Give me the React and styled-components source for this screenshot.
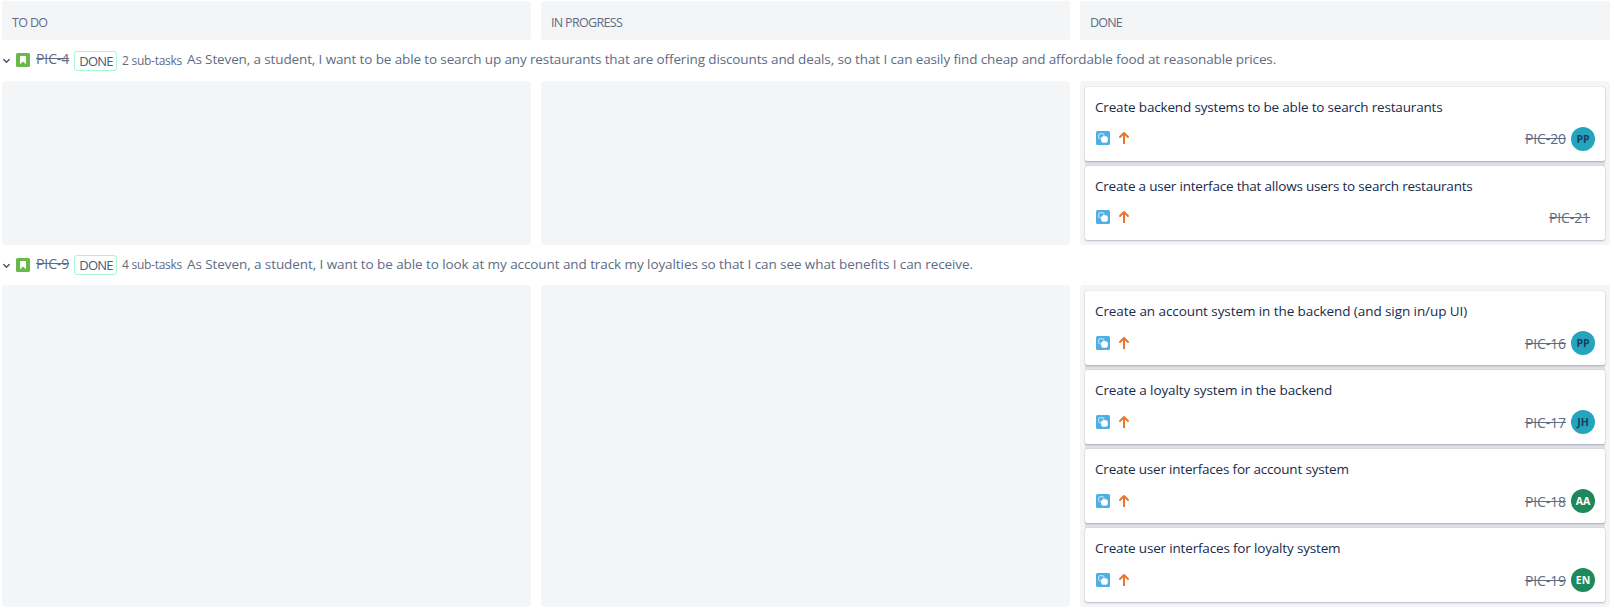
import React from "react";
import styled, { createGlobalStyle } from "styled-components";

const GlobalStyle = createGlobalStyle`
  * { box-sizing: border-box; }
  body {
    margin: 0;
    background: #fff;
    color: #172b4d;
    font-family: "Segoe UI", "Open Sans", "Noto Sans", sans-serif;
    font-size: 13.5px;
  }
`;

const Board = styled.main`
  width: 1614px;
  height: 609px;
  padding: 1px 4px 0 2px;
  overflow: hidden;
`;

const Columns = styled.div`
  display: grid;
  grid-template-columns: 529px 529px 530px;
  column-gap: 10px;
`;

const ColumnHeader = styled.h2`
  height: 39px;
  margin: 0;
  padding: 13px 10px 0;
  border-radius: 3px;
  background: #f4f5f7;
  color: #5e6c84;
  font-size: 12.5px;
  line-height: 17px;
  font-weight: 400;
  letter-spacing: ${(p) => p.$spacing}px;
`;

const Column = styled.div`
  padding: 6px 5px 5px;
  min-height: 60px;
  border-radius: 4px;
  background: #f4f5f7;
`;

const CardList = styled.div`
  display: flex;
  flex-direction: column;
  gap: 5px;
  border-radius: 2px;
  background: #dfe1e6;
`;

const Card = styled.article`
  display: flex;
  flex-direction: column;
  justify-content: space-between;
  height: 74px;
  padding: 10px;
  border-radius: 2px;
  background: #fff;
  box-shadow: 0 1px 2px rgba(9, 30, 66, 0.25), 0 0 1px rgba(9, 30, 66, 0.2);
`;

const CardTitle = styled.div`
  height: 20px;
  line-height: 20px;
  white-space: nowrap;
  letter-spacing: ${(p) => p.$spacing}px;
`;

const CardFooter = styled.div`
  display: flex;
  align-items: center;
  height: 24px;
  padding-left: 1px;
`;

const CardMeta = styled.div`
  flex: 1;
  display: flex;
  align-items: center;
  gap: 7px;
  padding-bottom: ${(p) => (p.$raised ? 2 : 0)}px;
`;

const CardKey = styled.span`
  margin-left: auto;
  margin-right: 5px;
  padding-top: 1px;
  color: #5e6c84;
  font-size: 14px;
  line-height: 20px;
  letter-spacing: -0.1px;
  text-decoration: line-through;
`;

const Avatar = styled.span`
  display: flex;
  align-items: center;
  justify-content: center;
  width: 24px;
  height: 24px;
  border-radius: 50%;
  background: ${(p) => (p.$tone === "teal" ? "#24a5bd" : "#1f875c")};
  color: ${(p) => (p.$tone === "teal" ? "#1b3b5e" : "#fff")};
  font-size: 10.5px;
  font-weight: 700;
  line-height: 24px;
`;

const SwimlaneHeader = styled.div`
  display: flex;
  align-items: center;
  height: ${(p) => p.$height}px;
  color: #5e6c84;
  white-space: nowrap;
`;

const Chevron = styled.svg`
  flex: none;
  margin: 1px 5px 0 0;
`;

const StoryMark = styled.svg`
  flex: none;
  margin-bottom: 1px;
`;

const StoryKey = styled.span`
  margin: 0 5px 3px 6px;
  width: 33px;
  font-size: 14px;
  line-height: 20px;
  letter-spacing: -0.1px;
  text-decoration: line-through;
`;

const Status = styled.span`
  width: 43px;
  height: 20px;
  padding-left: 1px;
  border: 1px solid #abf5d1;
  border-radius: 3px;
  color: #4c5a75;
  font-size: 13px;
  line-height: 19px;
  letter-spacing: -0.8px;
  text-align: center;
`;

const SubtaskCount = styled.span`
  width: 70px;
  padding-left: 5px;
  margin-bottom: 1px;
  font-size: 12px;
  letter-spacing: -0.27px;
`;

const Summary = styled.span`
  height: 20px;
  margin-bottom: 3px;
  line-height: 20px;
  letter-spacing: ${(p) => p.$spacing}px;
`;

const StoryIcon = () => (
  <StoryMark width="14" height="14" viewBox="0 0 14 14">
    <rect width="14" height="14" rx="1.5" fill="#67b94a" />
    <path d="M4 3.5a.5.5 0 0 1 .5-.5h5a.5.5 0 0 1 .5.5v7.8L7 8.6l-3 2.7z" fill="#fff" />
  </StoryMark>
);

const SubtaskIcon = () => (
  <svg width="14" height="14" viewBox="0 0 14 14">
    <rect width="14" height="14" rx="1.5" fill="#4fafe4" />
    <rect x="2.6" y="2.6" width="5.4" height="5.4" rx="2" fill="none" stroke="#b5def5" strokeWidth="1.2" />
    <rect x="5.2" y="5.2" width="6.6" height="6.6" rx="2" fill="#fff" />
  </svg>
);

const PriorityIcon = () => (
  <svg width="14" height="14" viewBox="0 0 14 14" fill="none" stroke="#e8762d" strokeWidth="2">
    <path d="M7 13V2.2" />
    <path d="M3 6 7 2l4 4" strokeLinecap="round" strokeLinejoin="round" />
  </svg>
);

const columns = [
  { name: "TO DO", spacing: -0.65 },
  { name: "IN PROGRESS", spacing: -0.68 },
  { name: "DONE", spacing: -0.8 },
];

const swimlanes = [
  {
    id: "PIC-4",
    height: 41,
    raised: true,
    count: "2 sub-tasks",
    summary:
      "As Steven, a student, I want to be able to search up any restaurants that are offering discounts and deals, so that I can easily find cheap and affordable food at reasonable prices.",
    spacing: -0.124,
    cards: [
      { id: "PIC-20", title: "Create backend systems to be able to search restaurants", who: "PP", tone: "teal", spacing: -0.17 },
      { id: "PIC-21", title: "Create a user interface that allows users to search restaurants", spacing: -0.204 },
    ],
  },
  {
    id: "PIC-9",
    height: 40,
    raised: false,
    count: "4 sub-tasks",
    summary:
      "As Steven, a student, I want to be able to look at my account and track my loyalties so that I can see what benefits I can receive.",
    spacing: -0.081,
    cards: [
      { id: "PIC-16", title: "Create an account system in the backend (and sign in/up UI)", who: "PP", tone: "teal", spacing: -0.08 },
      { id: "PIC-17", title: "Create a loyalty system in the backend", who: "JH", tone: "teal", spacing: -0.104 },
      { id: "PIC-18", title: "Create user interfaces for account system", who: "AA", tone: "green", spacing: -0.191 },
      { id: "PIC-19", title: "Create user interfaces for loyalty system", who: "EN", tone: "green", spacing: -0.172 },
    ],
  },
];

export default function App() {
  return (
    <Board>
      <GlobalStyle />
      <Columns>
        {columns.map((c) => (
          <ColumnHeader key={c.name} $spacing={c.spacing}>{c.name}</ColumnHeader>
        ))}
      </Columns>
      {swimlanes.map((lane) => (
        <section key={lane.id}>
          <SwimlaneHeader $height={lane.height}>
            <Chevron width="9" height="6" viewBox="0 0 9 6" fill="none" stroke="#42526e" strokeWidth="1.4">
              <path d="M1.8 1.5 4.5 4.2l2.7-2.7" strokeLinecap="round" strokeLinejoin="round" />
            </Chevron>
            <StoryIcon />
            <StoryKey>{lane.id}</StoryKey>
            <Status>DONE</Status>
            <SubtaskCount>{lane.count}</SubtaskCount>
            <Summary $spacing={lane.spacing}>{lane.summary}</Summary>
          </SwimlaneHeader>
          <Columns>
            <Column />
            <Column />
            <Column>
              <CardList>
                {lane.cards.map((card) => (
                  <Card key={card.id}>
                    <CardTitle $spacing={card.spacing}>{card.title}</CardTitle>
                    <CardFooter>
                      <CardMeta $raised={lane.raised}>
                        <SubtaskIcon />
                        <PriorityIcon />
                        <CardKey>{card.id}</CardKey>
                      </CardMeta>
                      {card.who && <Avatar $tone={card.tone}>{card.who}</Avatar>}
                    </CardFooter>
                  </Card>
                ))}
              </CardList>
            </Column>
          </Columns>
        </section>
      ))}
    </Board>
  );
}
